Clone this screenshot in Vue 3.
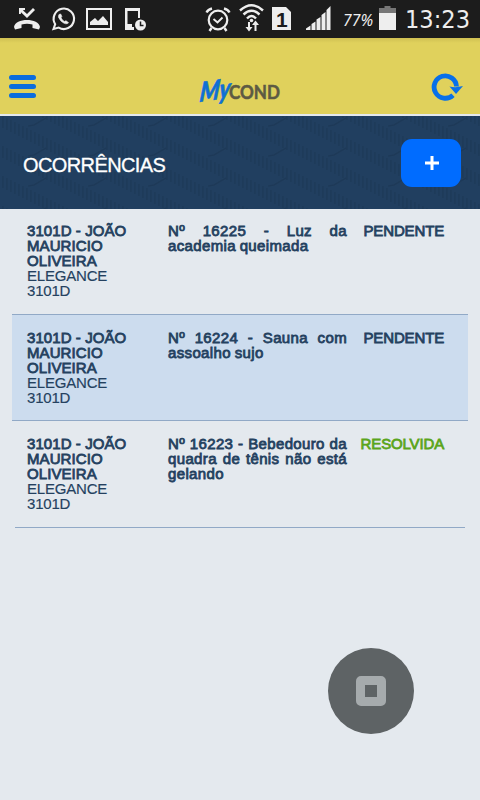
<script setup>
const rows = [
  { text: 'Nº 16225 - Luz da academia queimada', status: 'PENDENTE' },
  { text: 'Nº 16224 - Sauna com assoalho sujo', status: 'PENDENTE' },
  { text: 'Nº 16223 - Bebedouro da quadra de tênis não está gelando', status: 'RESOLVIDA' },
]
const bars = Array.from({ length: 15 }, (_, i) => ({ x: i * 4 + 2, y: i * 2 }))
</script>

<template>
  <div class="screen">
    <svg class="statusbar" width="480" height="38" viewBox="0 0 480 38">
      <g fill="#eee">
        <path d="M14 27C15 17.500 39 17.500 40 27L39 29.500L32.500 28V24.500Q27 22.800 21.500 24.500V28L15 29.500Z" />
        <path d="M19 8H25V10L22.800 10.300L27 14L33 8L35 10L27 18L21 12.200L20.800 14H19Z" />
        <path fill-rule="evenodd" d="M86 8H112V30H86ZM88 10V28H110V10Z" />
        <path d="M90 25V22L95 18L98 21L103 16L108 22V25Z" />
        <path d="M125 8H140V18H138V11H127.500V24H132V27H134V30H125Z" />
        <circle cx="140.500" cy="25" r="5.500" />
      </g>
      <path d="M140.500 21.500V25.500H143.500" fill="none" stroke="#1c1c1c" stroke-width="1.500" />
      <g fill="none" stroke="#eee">
        <path d="M53.500 29L55.200 24.200A10.200 10.200 0 1 1 58.700 27.600Z" stroke-width="2.100" />
        <path d="M59 14.500Q57.200 17 61 21Q66 25.500 68.500 22.700L66 20.800L64.300 21.500Q61.800 19.900 61 17.800L61.800 16.500L60.700 14Z" fill="#eee" stroke-width=".7" />
        <circle cx="218" cy="20" r="9.300" stroke-width="2.200" />
        <path d="M213.500 19L217.500 22.500L222.500 17.500" stroke-width="1.900" />
        <path d="M206.500 12.500Q208 9.500 212 8.500M229.500 12.500Q228 9.500 224 8.500M211.500 28L209.500 31M224.500 28L226.500 31" stroke-width="2.400" />
        <path d="M240 10.500Q251.500 0 263 10.500M243.500 14.500Q251.500 7 259.500 14.500M247 18.500Q251.500 13.500 256 18.500" stroke-width="2.400" />
        <path d="M249 22V29M255.500 31V24" stroke-width="2" />
      </g>
      <g fill="#eee">
        <circle cx="251.500" cy="20.500" r="1.800" />
        <path d="M245.500 27H252.500L249 31.500ZM252 25H259L255.500 20.500Z" />
        <path d="M272 7H286L291 12V30H272Z" />
        <path d="M306 30V28.500L310.500 25.500V30ZM311.500 30V24L315.500 21.500V30ZM316.500 30V19.500L320.500 17V30ZM321.500 30V15L325.500 12V30ZM326.500 30V10L330.500 6V30Z" />
        <path d="M379 13H396V30H379Z" />
      </g>
      <path d="M379 13V8H384.500V6H390.500V8H396V13Z" fill="#777" />
      <text x="276" y="27" class="sim">1</text>
      <text x="343" y="26" class="pct" textLength="30" lengthAdjust="spacingAndGlyphs">77%</text>
      <text x="405" y="28" class="time" textLength="65" lengthAdjust="spacingAndGlyphs">13:23</text>
    </svg>

    <header class="topbar">
      <div class="menu"><i></i><i></i><i></i></div>
      <svg class="logo" width="90" height="34" viewBox="0 0 90 34">
        <text class="my" transform="translate(4 27) rotate(-8) skewX(-14)" textLength="31" lengthAdjust="spacingAndGlyphs">My</text>
        <text class="cond" x="34" y="23.500" textLength="51" lengthAdjust="spacingAndGlyphs">COND</text>
      </svg>
      <svg class="reload" width="32" height="28" viewBox="0 0 32 28">
        <path d="M22 22.200A11.200 11.200 0 1 1 25.500 13.500" fill="none" stroke="#0870e8" stroke-width="4.800" />
        <path d="M18.500 13.500Q25 15 32 13L25 21Z" fill="#0870e8" />
      </svg>
    </header>

    <section class="heading">
      <svg class="texture" width="480" height="93">
        <defs>
          <pattern id="weave" width="60" height="30" patternUnits="userSpaceOnUse">
            <g fill="#19344f" opacity=".42">
              <template v-for="b in bars" :key="b.x">
                <rect :x="b.x" :y="b.y" width="1.800" height="12" />
                <rect :x="b.x" :y="b.y - 30" width="1.800" height="12" />
              </template>
            </g>
            <path d="M28 10L34 9L46 2" fill="none" stroke="#19344f" stroke-width="1.500" opacity=".5" />
          </pattern>
        </defs>
        <rect width="480" height="93" fill="url(#weave)" />
      </svg>
      <h1>OCORRÊNCIAS</h1>
      <button class="add">
        <svg width="14" height="14" viewBox="0 0 14 14"><path d="M7 0V14M0 7H14" stroke="#fff" stroke-width="3" /></svg>
      </button>
    </section>

    <main class="list">
      <article v-for="(r, i) in rows" :key="i" class="row" :class="{ first: i === 0, alt: i === 1, last: i === 2 }">
        <div class="who"><b>3101D - JOÃO MAURICIO OLIVEIRA</b><br />ELEGANCE 3101D</div>
        <p class="what">{{ r.text }}</p>
        <div class="state" :class="{ done: r.status === 'RESOLVIDA' }">{{ r.status }}</div>
      </article>
    </main>

    <div class="float"><span></span></div>
  </div>
</template>

<style>
body { margin: 0; background: #e4e9ee; }
</style>

<style scoped>
.screen {
  position: relative;
  width: 480px;
  height: 800px;
  overflow: hidden;
  background: #e4e9ee;
  font-family: "Liberation Sans", Arial, sans-serif;
  color: #24415f;
}
.statusbar { display: block; background: #1c1c1c; }
.sim { font: bold 21px "Liberation Sans", sans-serif; fill: #1c1c1c; }
.pct { font: italic 17px "Noto Sans", sans-serif; fill: #eee; }
.time { font: 25px "DejaVu Sans", sans-serif; fill: #eee; }
.topbar {
  display: flex;
  align-items: flex-start;
  justify-content: space-between;
  height: 76px;
  padding: 0 17px 0 9px;
  box-sizing: border-box;
  background: linear-gradient(#cfc052, #e0d15c 5px);
}
.menu { display: flex; flex-direction: column; gap: 4px; padding-top: 37px; width: 27px; }
.menu i { height: 5px; border-radius: 3px; background: #0b6ddd; }
.logo { margin: 37px 0 0 12px; overflow: visible; }
.my { font: italic 900 27px Lato, sans-serif; fill: #1070d4; stroke: #1070d4; stroke-width: 0.6px; }
.cond { font: bold 18px Lato, sans-serif; fill: #5d5a43; stroke: #5d5a43; stroke-width: 0.5px; }
.reload { margin-top: 35px; }
.heading {
  position: relative;
  display: flex;
  align-items: center;
  justify-content: space-between;
  height: 93px;
  padding: 0 19px 0 23px;
  box-sizing: border-box;
  margin-top: 2px;
  background: #213f60;
}
.texture { position: absolute; left: 0; top: 0; }
h1 {
  position: relative;
  margin: 5px 0 0;
  font-size: 20px;
  font-weight: 400;
  letter-spacing: -0.6px;
  color: #fff;
  -webkit-text-stroke: 0.3px #fff;
}
.add {
  position: relative;
  display: flex;
  align-items: center;
  justify-content: center;
  width: 60px;
  height: 48px;
  padding: 0 0 0 2px;
  border: 0;
  border-radius: 11px;
  margin-top: 1px;
  background: #006cff;
}
.list { padding: 0 12px; }
.row {
  display: grid;
  grid-template-columns: 141px 179px 97px;
  height: 106px;
  box-sizing: border-box;
  padding: 15px 15px 0;
  border-bottom: 1px solid #91a9c6;
  font-size: 15px;
  line-height: 15px;
}
.first { padding-top: 14px; }
.alt { background: #ccdcee; }
.last { margin: 0 3px; padding: 15px 12px 0; height: 107px; }
.who { width: 110px; letter-spacing: -0.2px; -webkit-text-stroke: 0.15px currentColor; }
.who b, .what, .state { font-weight: 400; -webkit-text-stroke: 0.8px currentColor; }
.who b { letter-spacing: 0.08px; }
.what { margin: 0; text-align: justify; letter-spacing: 0.36px; word-spacing: -0.8px; }
.state { text-align: right; letter-spacing: -0.15px; }
.done { color: #5ba51b; }
.float {
  position: absolute;
  left: 328px;
  top: 648px;
  display: flex;
  align-items: center;
  justify-content: center;
  width: 86px;
  height: 86px;
  border-radius: 50%;
  background: #5e6365;
}
.float span {
  box-sizing: border-box;
  width: 30px;
  height: 30px;
  border: 9px solid #a6abad;
  border-radius: 5px;
}
</style>
